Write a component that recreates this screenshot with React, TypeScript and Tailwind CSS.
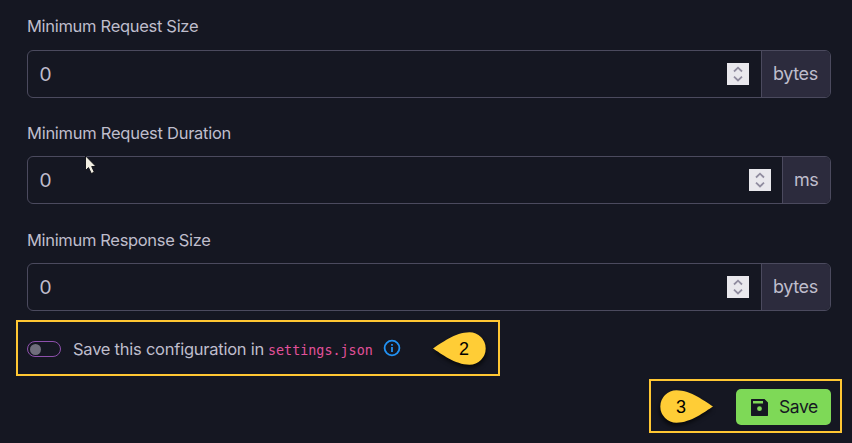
import React from "react";

function Stepper() {
  return (
    <svg width="22" height="22" viewBox="0 0 22 22" className="shrink-0 bg-[#e9e8ed]" fill="none" stroke="#918da0" strokeWidth="1.8">
      <path d="M7 8.500 11 4.700 15 8.500M7 13.700 11 17.500 15 13.700" />
    </svg>
  );
}

function Field({ label, unit, labelClass, unitClass, space, gap }: {
  label: string; unit: string; labelClass: string; unitClass: string; space: string; gap: string;
}) {
  return (
    <div className={space}>
      <div className={`h-6 whitespace-nowrap text-[16.5px] leading-6 ${labelClass}`}>{label}</div>
      <div className={`flex h-12 overflow-hidden rounded-[6px] border border-[#4b4a5e] ${gap}`}>
        <div className={`flex flex-1 items-center justify-between pl-3 ${unit === "ms" ? "pr-[11px]" : "pr-3"}`}>
          <span className="font-['Lato',sans-serif] text-[19px] leading-6">0</span>
          <Stepper />
        </div>
        <div className={`flex items-center border-l border-[#4b4a5e] bg-[#2c2b3d] pl-[11px] text-[18px] leading-6 ${unitClass}`}>{unit}</div>
      </div>
    </div>
  );
}

function Callout({ n, flip }: { n: string; flip?: boolean }) {
  return (
    <div className="relative h-[33px] w-[53px] shrink-0">
      <svg width="53" height="33" viewBox="0 0 53 33" className={`overflow-visible drop-shadow-[1px_3px_2px_rgba(0,0,0,0.65)] ${flip ? "-scale-x-100" : ""}`}>
        <path d="M0 16.500C8 11.500 22 .3 36.500.3a16.200 16.200 0 0 1 0 32.400C22 32.700 8 21.500 0 16.500Z" fill="#ffcd36" />
      </svg>
      <span className={`absolute top-[5px] font-['Liberation_Sans',sans-serif] text-[18px] leading-6 text-black ${flip ? "left-4" : "left-[26px]"}`}>{n}</span>
    </div>
  );
}

export default function App() {
  return (
    <div className="h-[443px] w-[852px] overflow-hidden bg-[#151722] pl-[27px] pr-[21px] pt-[14px] font-['Inter',sans-serif] text-[#bfbdcc]">
      <Field label="Minimum Request Size" unit="bytes" space="" gap="mt-3" labelClass="tracking-[-0.3px]" unitClass="w-[69px] tracking-[-0.4px]" />
      <Field label="Minimum Request Duration" unit="ms" space="mt-[23px]" gap="mt-[11px]" labelClass="tracking-[-0.26px]" unitClass="w-[48px] tracking-[-0.6px]" />
      <Field label="Minimum Response Size" unit="bytes" space="mt-6" gap="mt-[11px]" labelClass="tracking-[-0.33px]" unitClass="w-[69px] tracking-[-0.4px]" />

      <div className="-ml-[11px] mt-[9px] flex h-14 w-[484px] items-center border-2 border-[#ffc733] pl-[9px] pt-[2px]">
        <div className="flex h-4 w-[34px] items-center rounded-full border border-[#8d50ac] pl-[2px]">
          <div className="size-[11px] rounded-full bg-[#706e7c]" />
        </div>
        <span className="ml-3 w-[195px] whitespace-nowrap text-[16.5px] leading-6 tracking-[-0.24px]">Save this configuration in</span>
        <code className="mt-[3px] w-[105px] whitespace-nowrap font-['DejaVu_Sans_Mono',monospace] text-[13.4px] leading-5 text-[#e2519a]">settings.json</code>
        <svg width="18" height="18" viewBox="0 0 18 18" className="-mt-[2px] ml-[10px]" fill="none" stroke="#2292f4" strokeWidth="1.8">
          <circle cx="9" cy="9" r="7.4" />
          <path d="M9 8v5M9 5v1.8" />
        </svg>
        <div className="-mt-px ml-8"><Callout n="2" /></div>
      </div>

      <div className="-mr-[11px] ml-auto mt-[3px] flex h-[54px] w-[193px] items-center border-2 border-[#ffc733] pl-[9px]">
        <div className="mt-px"><Callout n="3" flip /></div>
        <button className="ml-[23px] mt-[2px] flex h-9 w-[95px] items-center rounded-[5px] bg-[#7ed957] pl-[15px] text-[17.5px] leading-6 tracking-[-0.4px] text-[#151722]">
          <svg width="17" height="17" viewBox="0 0 17 17" fill="#151722">
            <path fillRule="evenodd" d="M.5 0H13.500L17 3.500V16.500L16.500 17H.5L0 16.500V.5ZM2 2V4.500H12V2ZM8.500 7.300a2.400 2.400 0 1 0 0 4.800 2.400 2.400 0 0 0 0-4.800Z" />
          </svg>
          <span className="ml-[11px]">Save</span>
        </button>
      </div>
      <svg width="12" height="20" viewBox="0 0 12 20" className="absolute left-[85px] top-[155px]">
        <path d="M.5.8V15.500L3.500 12.600 6.300 18.500 9.300 17.200 6.700 11.500H11Z" fill="#f1eee2" stroke="#0b0b12" strokeWidth=".9" />
      </svg>
    </div>
  );
}
